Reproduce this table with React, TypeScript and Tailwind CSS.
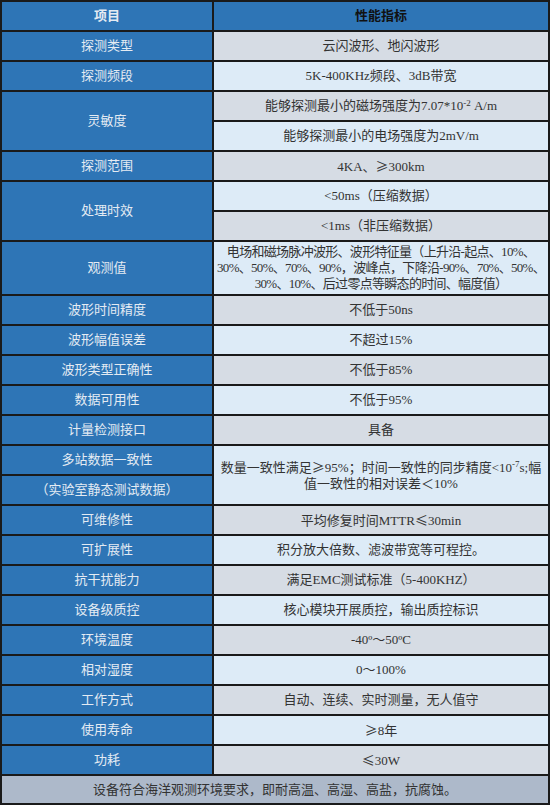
import React from "react";

const font = { fontFamily: '"Liberation Serif", "Noto Sans CJK SC", serif' };

type CellProps = { children: React.ReactNode; className?: string };

// left column: blue header cells with light text
const L = ({ children, className = "" }: CellProps) => (
  <div className={`flex items-center justify-center bg-[#2e75b6] text-[13px] text-[#e4ebf3] ${className}`}>
    {children}
  </div>
);

const G = ({ children, className = "" }: CellProps) => (
  <div className={`flex items-center justify-center bg-[#d6dce4] px-1 text-center text-[13px] text-[#333333] ${className}`}>
    {children}
  </div>
);

const B = ({ children, className = "" }: CellProps) => (
  <div className={`flex items-center justify-center bg-[#ddebf7] px-1 text-center text-[13px] text-[#333333] ${className}`}>
    {children}
  </div>
);

// full-width comparison signs, as in the source sheet
const W = ({ children }: { children: React.ReactNode }) => (
  <span className="font-['Noto_Sans_CJK_SC',sans-serif]">{children}</span>
);

export default function App() {
  return (
    <div className="h-[805px] w-[550px] bg-white" style={font}>
      <div className="grid h-[805px] w-[550px] grid-cols-[210px_334px] grid-rows-[repeat(8,28px)_52px_repeat(16,28px)_27px] gap-[2px] bg-[#1a1a1a] p-[2px]">
        <L className="font-bold text-[#111111]">项目</L>
        <div className="flex items-center justify-center bg-[#2e75b6] text-[13px] font-bold text-[#111111]">性能指标</div>

        <L>探测类型</L>
        <G>云闪波形、地闪波形</G>

        <L>探测频段</L>
        <B>5K-400KHz频段、3dB带宽</B>

        <L className="row-span-2">灵敏度</L>
        <G>
          <span>
            能够探测最小的磁场强度为7.07*10<sup className="text-[9px]">-2</sup> A/m
          </span>
        </G>
        <B>能够探测最小的电场强度为2mV/m</B>

        <L>探测范围</L>
        <G>
          <span>
            4KA、<W>≥</W>300km
          </span>
        </G>

        <L className="row-span-2">处理时效</L>
        <B>&lt;50ms（压缩数据）</B>
        <G>&lt;1ms（非压缩数据）</G>

        <L>观测值</L>
        <B className="overflow-hidden px-0 text-[12px] leading-[16px] tracking-[-0.7px]">
          <span className="whitespace-nowrap">
            电场和磁场脉冲波形、波形特征量（上升沿-起点、10%、
            <br />
            30%、50%、70%、90%，波峰点，下降沿-90%、70%、50%、
            <br />
            30%、10%、后过零点等瞬态的时间、幅度值）
          </span>
        </B>

        <L>波形时间精度</L>
        <G>不低于50ns</G>

        <L>波形幅值误差</L>
        <B>不超过15%</B>

        <L>波形类型正确性</L>
        <G>不低于85%</G>

        <L>数据可用性</L>
        <B>不低于95%</B>

        <L>计量检测接口</L>
        <G>具备</G>

        <L>多站数据一致性</L>
        <B className="row-span-2 leading-[16px]">
          <span className="whitespace-nowrap">
            数量一致性满足<W>≥</W>95%；时间一致性的同步精度&lt;10<sup className="text-[9px]">-7</sup>s;幅
            <br />
            值一致性的相对误差＜10%
          </span>
        </B>
        <L>（实验室静态测试数据）</L>

        <L>可维修性</L>
        <G>
          <span>
            平均修复时间MTTR<W>≤</W>30min
          </span>
        </G>

        <L>可扩展性</L>
        <B>积分放大倍数、滤波带宽等可程控。</B>

        <L>抗干扰能力</L>
        <G>满足EMC测试标准（5-400KHZ）</G>

        <L>设备级质控</L>
        <B>核心模块开展质控，输出质控标识</B>

        <L>环境温度</L>
        <G>-40º～50ºC</G>

        <L>相对湿度</L>
        <B>0～100%</B>

        <L>工作方式</L>
        <G>自动、连续、实时测量，无人值守</G>

        <L>使用寿命</L>
        <B>
          <span>
            <W>≥</W>8年
          </span>
        </B>

        <L>功耗</L>
        <G>
          <span>
            <W>≤</W>30W
          </span>
        </G>

        <div className="col-span-2 flex items-center justify-center bg-[#adb9ca] text-[13px] text-[#333333]">
          设备符合海洋观测环境要求，即耐高温、高湿、高盐，抗腐蚀。
        </div>
      </div>
    </div>
  );
}
